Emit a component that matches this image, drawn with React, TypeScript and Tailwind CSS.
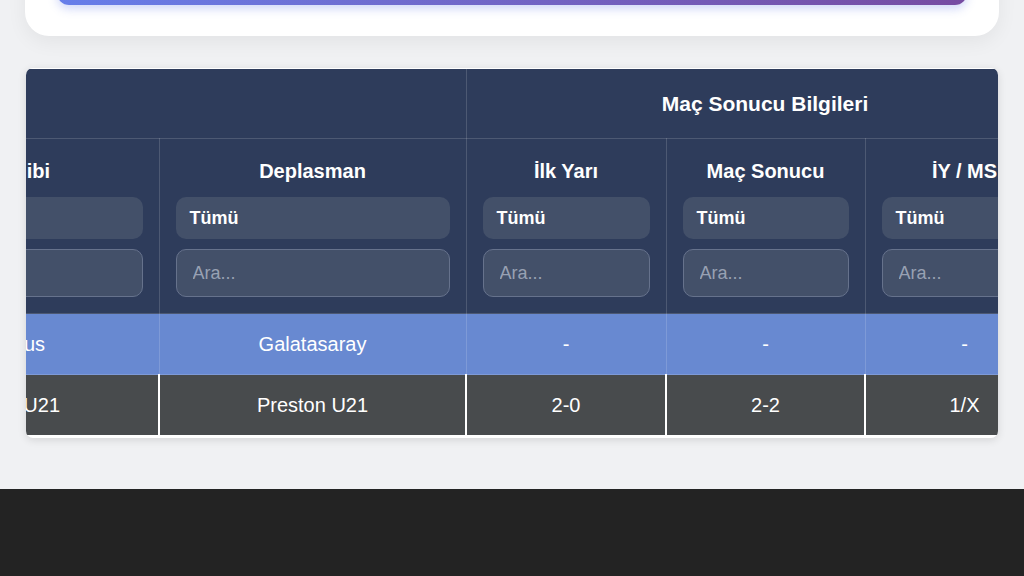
import React, { useLayoutEffect, useRef } from 'react';

interface Column {
  key: string;
  label: string;
  width: string;
}

const infoColumns: Column[] = [
  { key: 'tarih', label: 'Tarih', width: 'w-[220px] min-w-[220px]' },
  { key: 'lig', label: 'Lig', width: 'w-[250px] min-w-[250px]' },
  { key: 'ev', label: 'Ev Sahibi', width: 'w-[308px] min-w-[308px]' },
  { key: 'dep', label: 'Deplasman', width: 'w-[307px] min-w-[307px]' },
];

const resultColumns: Column[] = [
  { key: 'iy', label: 'İlk Yarı', width: 'w-[200px] min-w-[200px]' },
  { key: 'ms', label: 'Maç Sonucu', width: 'w-[199px] min-w-[199px]' },
  { key: 'iyms', label: 'İY / MS', width: 'w-[199px] min-w-[199px]' },
];

const rows = [
  { tarih: '18.09.2025', lig: 'Şampiyonlar Ligi', ev: 'Juventus', dep: 'Galatasaray', iy: '-', ms: '-', iyms: '-', live: true },
  { tarih: '17.09.2025', lig: 'Premier League 2', ev: 'Burnley U21', dep: 'Preston U21', iy: '2-0', ms: '2-2', iyms: '1/X', live: false },
];

const FilterCell: React.FC<{ col: Column }> = ({ col }) => (
  <th className={`${col.width} border border-white/15 px-4 pt-[20px] pb-[16px] align-top font-bold`}>
    <div className="text-[20px] leading-[24px] text-white">{col.label}</div>
    <div className="mt-[14px] flex h-[42px] items-center rounded-[10px] bg-[#435069] px-[14px] text-[18px] font-bold text-white">
      Tümü
    </div>
    <input
      placeholder="Ara..."
      className="mt-[10px] h-[48px] w-full rounded-[10px] border border-[#66728c] bg-[#435069] px-4 text-[18px] font-normal text-white outline-none placeholder:text-[#98a1b3]"
    />
  </th>
);

export default function App() {
  const scrollRef = useRef<HTMLDivElement>(null);

  useLayoutEffect(() => {
    if (scrollRef.current) scrollRef.current.scrollLeft = 646;
  }, []);

  const allColumns = [...infoColumns, ...resultColumns];

  return (
    <div className="flex min-h-screen flex-col overflow-hidden bg-[#f0f1f3] font-['Liberation_Sans',Arial,sans-serif]">
      <div className="mx-[25px] -mt-[70px] rounded-[24px] bg-white px-8 pt-8 pb-[31px] shadow-[0_6px_20px_rgba(0,0,0,0.06)]">
        <div className="h-[43px] rounded-[12px] bg-gradient-to-r from-[#667eea] to-[#764ba2] shadow-[0_4px_10px_rgba(102,126,234,0.3)]" />
      </div>

      <div className="mx-[26px] mt-[32px] overflow-hidden rounded-[7px] bg-white pb-[3px] shadow-[0_2px_8px_rgba(0,0,0,0.12)]">
        <div ref={scrollRef} className="overflow-x-auto [scrollbar-width:none]">
          <table className="border-collapse text-center">
            <thead className="bg-[#2e3c5b]">
              <tr className="h-[70px]">
                <th colSpan={infoColumns.length} className="border border-white/15 text-[21px] font-bold text-white">
                  Maç Bilgileri
                </th>
                <th colSpan={resultColumns.length} className="border border-white/15 text-[21px] font-bold text-white">
                  Maç Sonucu Bilgileri
                </th>
              </tr>
              <tr>
                {allColumns.map((col) => (
                  <FilterCell key={col.key} col={col} />
                ))}
              </tr>
            </thead>
            <tbody>
              {rows.map((row, i) => (
                <tr
                  key={i}
                  className={row.live ? 'h-[61px] bg-[#6889d1] text-white' : 'h-[60px] bg-[#484b4d] text-white'}
                >
                  {allColumns.map((col) => (
                    <td
                      key={col.key}
                      className={`px-4 text-[20px] ${row.live ? 'border border-white/15' : 'border-x-2 border-white'}`}
                    >
                      {row[col.key as keyof typeof row]}
                    </td>
                  ))}
                </tr>
              ))}
            </tbody>
          </table>
        </div>
      </div>

      <div className="mt-[51px] h-[120px] bg-[#232323]" />
    </div>
  );
}
